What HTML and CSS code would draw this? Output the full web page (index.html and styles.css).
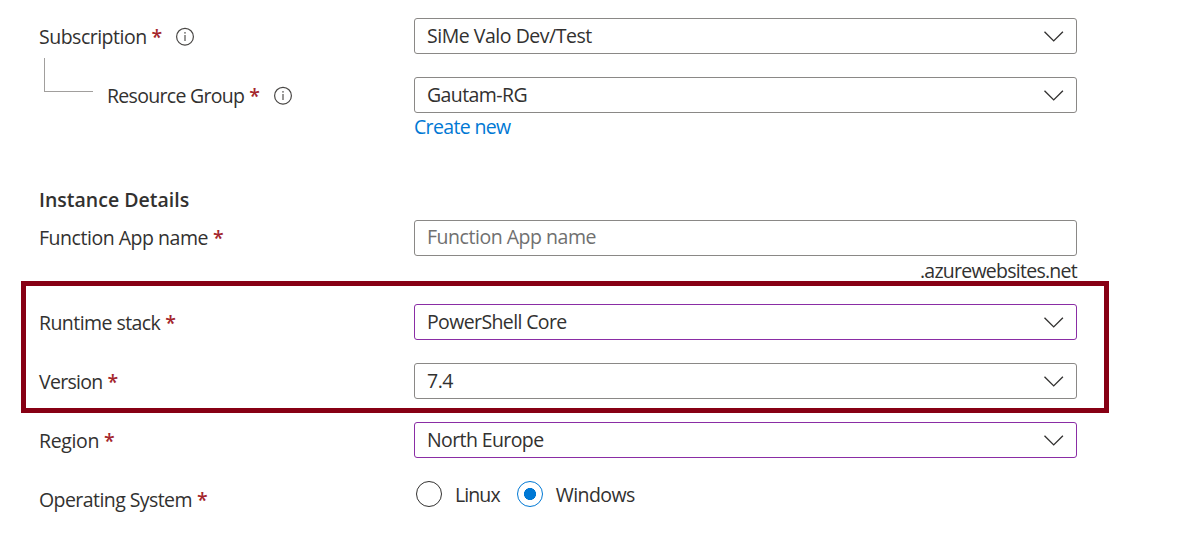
FILE: index.html
```html
<!DOCTYPE html>
<html lang="en">
<head>
<meta charset="utf-8">
<title>Create Function App</title>
<link rel="stylesheet" href="styles.css">
</head>
<body>
<svg width="0" height="0" class="defs">
  <symbol id="chevron" viewBox="0 0 20 12"><path d="M0.5 1.7 L9.7 10.9 L18.9 1.7" fill="none" stroke="#323130" stroke-width="1.35"/></symbol>
  <symbol id="info" viewBox="0 0 20 20"><circle cx="10" cy="9.7" r="8.4" fill="none" stroke="#484644" stroke-width="1.2"/><path d="M10 8V14" stroke="#605e5c" stroke-width="1.3"/><circle cx="10" cy="5.8" r=".85" fill="#605e5c"/></symbol>
</svg>
<main class="form">
  <div class="row">
    <div class="label"><span class="t-subscription">Subscription</span><b class="req">*</b><svg class="info"><use href="#info"/></svg></div>
    <div class="field"><span class="t-sime">SiMe Valo Dev/Test</span><svg class="chevron"><use href="#chevron"/></svg></div>
  </div>
  <div class="row row-group">
    <div class="label label-child"><i class="elbow"></i><span class="t-group">Resource Group</span><b class="req">*</b><svg class="info"><use href="#info"/></svg></div>
    <div class="field"><span class="t-gautam">Gautam-RG</span><svg class="chevron"><use href="#chevron"/></svg></div>
  </div>
  <div class="below"><a class="link t-create">Create new</a></div>
  <h2 class="heading">Instance Details</h2>
  <div class="row row-name">
    <div class="label"><span class="t-name">Function App name</span><b class="req">*</b></div>
    <div class="field placeholder"><span class="t-name">Function App name</span></div>
  </div>
  <div class="below suffix"><span class="t-suffix">.azurewebsites.net</span></div>
  <section class="highlight">
    <div class="row">
      <div class="label"><span class="t-runtime">Runtime stack</span><b class="req">*</b></div>
      <div class="field changed"><span class="t-power">PowerShell Core</span><svg class="chevron"><use href="#chevron"/></svg></div>
    </div>
    <div class="row">
      <div class="label"><span class="t-version">Version</span><b class="req">*</b></div>
      <div class="field"><span class="t-number">7.4</span><svg class="chevron"><use href="#chevron"/></svg></div>
    </div>
  </section>
  <div class="row">
    <div class="label"><span class="t-region">Region</span><b class="req">*</b></div>
    <div class="field changed"><span class="t-north">North Europe</span><svg class="chevron"><use href="#chevron"/></svg></div>
  </div>
  <div class="row">
    <div class="label"><span class="t-os">Operating System</span><b class="req">*</b></div>
    <div class="radios">
      <span class="radio"></span><span class="t-linux">Linux</span>
      <span class="radio selected"></span><span class="t-windows">Windows</span>
    </div>
  </div>
</main>
</body>
</html>
```
FILE: styles.css
```css
*, *::after { box-sizing: border-box; }
body {
  margin: 0;
  background: #fff;
  color: #323130;
  font: 19.5px/26px "Open Sans", "Noto Sans", sans-serif;
  white-space: nowrap;
}
.defs { position: absolute; }
.form { width: 1077px; padding: 18px 0 0 39px; }
.row {
  display: grid;
  grid-template-columns: 375px 663px;
  height: 36px;
  margin-bottom: 23px;
}
.row-group, .row-name { margin-bottom: 0; }
.label { display: flex; align-items: center; padding-top: 2px; }
.row-name .label { padding-top: 0; }
.label-child { position: relative; padding-left: 68px; }
.elbow {
  position: absolute;
  left: 5px;
  top: -19px;
  width: 49px;
  height: 34px;
  border: solid #a19f9d;
  border-width: 0 0 1px 1px;
}
.req { margin-left: 5px; width: 10px; color: #a4262c; font-weight: 600; }
.info { width: 20px; height: 20px; margin: -1px 0 0 13.5px; }
.field {
  display: flex;
  align-items: center;
  justify-content: space-between;
  border: 1px solid #8a8886;
  border-radius: 3px;
  padding: 0 12px;
}
.changed { border-color: #8a2da5; }
.placeholder { color: #707070; padding-bottom: 2px; }
.chevron { width: 20px; height: 12px; }
.below { height: 28px; padding: 1px 0 0 375px; }
.link { color: #0078d4; }
.heading {
  margin: 46px 0 7px;
  height: 26px;
  font-size: 19.5px;
  line-height: 26px;
  font-weight: 600;
}
.suffix { text-align: right; padding-top: 2px; height: 48px; }
.highlight { position: relative; }
.highlight::after {
  content: "";
  position: absolute;
  left: -18px;
  top: -23px;
  width: 1088px;
  height: 132px;
  border: 5px solid #870014;
}
.radios { display: flex; align-items: center; height: 26px; padding-left: 2px; }
.radio {
  width: 26px;
  height: 26px;
  margin-right: 13px;
  border: 1px solid #323130;
  border-radius: 50%;
}
.radio.selected {
  margin-left: 17px;
  border-color: #0078d4;
  background: radial-gradient(circle, #0078d4 5.7px, transparent 6.3px);
}
.t-linux, .t-windows { padding-top: 2px; }

/* Per-string tracking */
.t-subscription { letter-spacing: -.5px; }
.t-sime { letter-spacing: -.47px; }
.t-group { letter-spacing: -.7px; }
.t-gautam { letter-spacing: -.58px; }
.t-create { letter-spacing: -.66px; }
.t-name { letter-spacing: -.47px; }
.t-suffix { letter-spacing: -.74px; }
.t-runtime { letter-spacing: -.56px; }
.t-power { letter-spacing: -.62px; }
.t-version { letter-spacing: -.7px; }
.t-number { letter-spacing: -.5px; }
.t-region { letter-spacing: -.35px; }
.t-north { letter-spacing: -.6px; }
.t-os { letter-spacing: -.57px; }
.t-linux { letter-spacing: -.9px; }
.t-windows { letter-spacing: -.57px; }
```
